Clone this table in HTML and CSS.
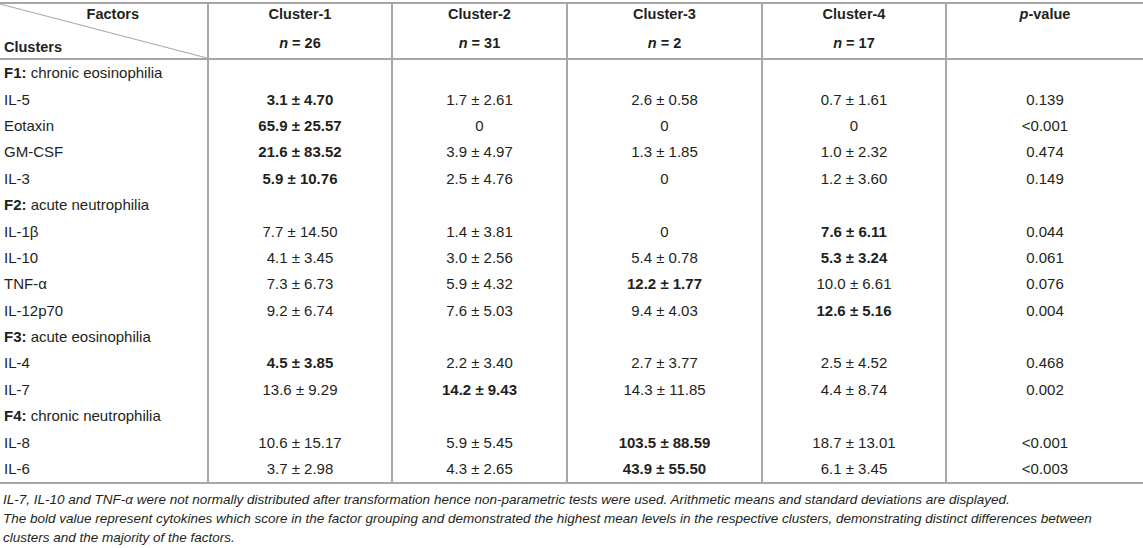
FILE: index.html
```html
<!DOCTYPE html>
<html lang="en">
<head>
    <meta charset="UTF-8">
    <title>Cytokine factors by cluster</title>
    <link rel="stylesheet" href="styles.css">
</head>
<body>
    <div class="wrap">
        <table class="data">
            <colgroup>
                <col class="c-first">
                <col class="c1">
                <col class="c2">
                <col class="c3">
                <col class="c4">
                <col class="c5">
            </colgroup>
            <thead>
                <tr>
                    <th class="corner">
                        <div class="corner-in">
                            <span class="factors">Factors</span>
                            <span class="clusters">Clusters</span>
                        </div>
                    </th>
                    <th><div>Cluster-1</div><div class="n"><i>n</i> = 26</div></th>
                    <th><div>Cluster-2</div><div class="n"><i>n</i> = 31</div></th>
                    <th><div>Cluster-3</div><div class="n"><i>n</i> = 2</div></th>
                    <th><div>Cluster-4</div><div class="n"><i>n</i> = 17</div></th>
                    <th class="pv"><div><i>p</i>-value</div><div class="n">&nbsp;</div></th>
                </tr>
            </thead>
            <tbody>
                <tr class="sec"><td><b>F1:</b> chronic eosinophilia</td><td></td><td></td><td></td><td></td><td></td></tr>
                <tr><td>IL-5</td><td><b>3.1 ± 4.70</b></td><td>1.7 ± 2.61</td><td>2.6 ± 0.58</td><td>0.7 ± 1.61</td><td>0.139</td></tr>
                <tr><td>Eotaxin</td><td><b>65.9 ± 25.57</b></td><td>0</td><td>0</td><td>0</td><td>&lt;0.001</td></tr>
                <tr><td>GM-CSF</td><td><b>21.6 ± 83.52</b></td><td>3.9 ± 4.97</td><td>1.3 ± 1.85</td><td>1.0 ± 2.32</td><td>0.474</td></tr>
                <tr><td>IL-3</td><td><b>5.9 ± 10.76</b></td><td>2.5 ± 4.76</td><td>0</td><td>1.2 ± 3.60</td><td>0.149</td></tr>
                <tr class="sec"><td><b>F2:</b> acute neutrophilia</td><td></td><td></td><td></td><td></td><td></td></tr>
                <tr><td>IL-1β</td><td>7.7 ± 14.50</td><td>1.4 ± 3.81</td><td>0</td><td><b>7.6 ± 6.11</b></td><td>0.044</td></tr>
                <tr><td>IL-10</td><td>4.1 ± 3.45</td><td>3.0 ± 2.56</td><td>5.4 ± 0.78</td><td><b>5.3 ± 3.24</b></td><td>0.061</td></tr>
                <tr><td>TNF-α</td><td>7.3 ± 6.73</td><td>5.9 ± 4.32</td><td><b>12.2 ± 1.77</b></td><td>10.0 ± 6.61</td><td>0.076</td></tr>
                <tr><td>IL-12p70</td><td>9.2 ± 6.74</td><td>7.6 ± 5.03</td><td>9.4 ± 4.03</td><td><b>12.6 ± 5.16</b></td><td>0.004</td></tr>
                <tr class="sec"><td><b>F3:</b> acute eosinophilia</td><td></td><td></td><td></td><td></td><td></td></tr>
                <tr><td>IL-4</td><td><b>4.5 ± 3.85</b></td><td>2.2 ± 3.40</td><td>2.7 ± 3.77</td><td>2.5 ± 4.52</td><td>0.468</td></tr>
                <tr><td>IL-7</td><td>13.6 ± 9.29</td><td><b>14.2 ± 9.43</b></td><td>14.3 ± 11.85</td><td>4.4 ± 8.74</td><td>0.002</td></tr>
                <tr class="sec"><td><b>F4:</b> chronic neutrophilia</td><td></td><td></td><td></td><td></td><td></td></tr>
                <tr><td>IL-8</td><td>10.6 ± 15.17</td><td>5.9 ± 5.45</td><td><b>103.5 ± 88.59</b></td><td>18.7 ± 13.01</td><td>&lt;0.001</td></tr>
                <tr><td>IL-6</td><td>3.7 ± 2.98</td><td>4.3 ± 2.65</td><td><b>43.9 ± 55.50</b></td><td>6.1 ± 3.45</td><td>&lt;0.003</td></tr>
            </tbody>
        </table>
        <div class="notes">
            <p>IL-7, IL-10 and TNF-α were not normally distributed after transformation hence non-parametric tests were used. Arithmetic means and standard deviations are displayed.</p>
            <p>The bold value represent cytokines which score in the factor grouping and demonstrated the highest mean levels in the respective clusters, demonstrating distinct differences between clusters and the majority of the factors.</p>
        </div>
    </div>
</body>
</html>
```

FILE: styles.css
```css
body {
    margin: 0;
    padding: 0;
    background: #ffffff;
    font-family: "Liberation Sans", Arial, sans-serif;
    color: #231f20;
}
.wrap {
    padding-top: 2px;
}
.data {
    width: 1143px;
    border-collapse: collapse;
    table-layout: fixed;
    font-size: 15px;
    border-top: 2px solid #a7a7a7;
    border-bottom: 2px solid #a7a7a7;
}
.c-first { width: 208px; }
.c1 { width: 184px; }
.c2 { width: 175px; }
.c3 { width: 195px; }
.c4 { width: 184px; }
.c5 { width: 197px; }

th, td {
    border-left: 2px solid #a7a7a7;
    text-align: center;
    padding: 0;
}
th:first-child, td:first-child {
    border-left: none;
    text-align: left;
    padding-left: 4px;
}
thead tr {
    border-bottom: 2px solid #a7a7a7;
}
th {
    height: 54px;
    vertical-align: top;
    font-weight: bold;
    font-size: 14.5px;
}
th div {
    line-height: 20px;
}
th .n {
    margin-top: 9px;
}
.corner {
    background: linear-gradient(to top right, transparent calc(50% - 1px), #a7a7a7 50%, transparent calc(50% + 1px));
}
.corner-in {
    display: flex;
    flex-direction: column;
    height: 54px;
}
.factors {
    align-self: flex-end;
    margin-right: 68px;
    line-height: 20px;
}
.clusters {
    margin-top: auto;
    line-height: 21px;
}
td {
    height: 26.4px;
    line-height: 26px;
    white-space: nowrap;
}
.notes {
    padding: 6px 16px 0 3px;
    font-size: 13.5px;
    font-style: italic;
    line-height: 19px;
}
.notes p {
    margin: 0;
}
```
